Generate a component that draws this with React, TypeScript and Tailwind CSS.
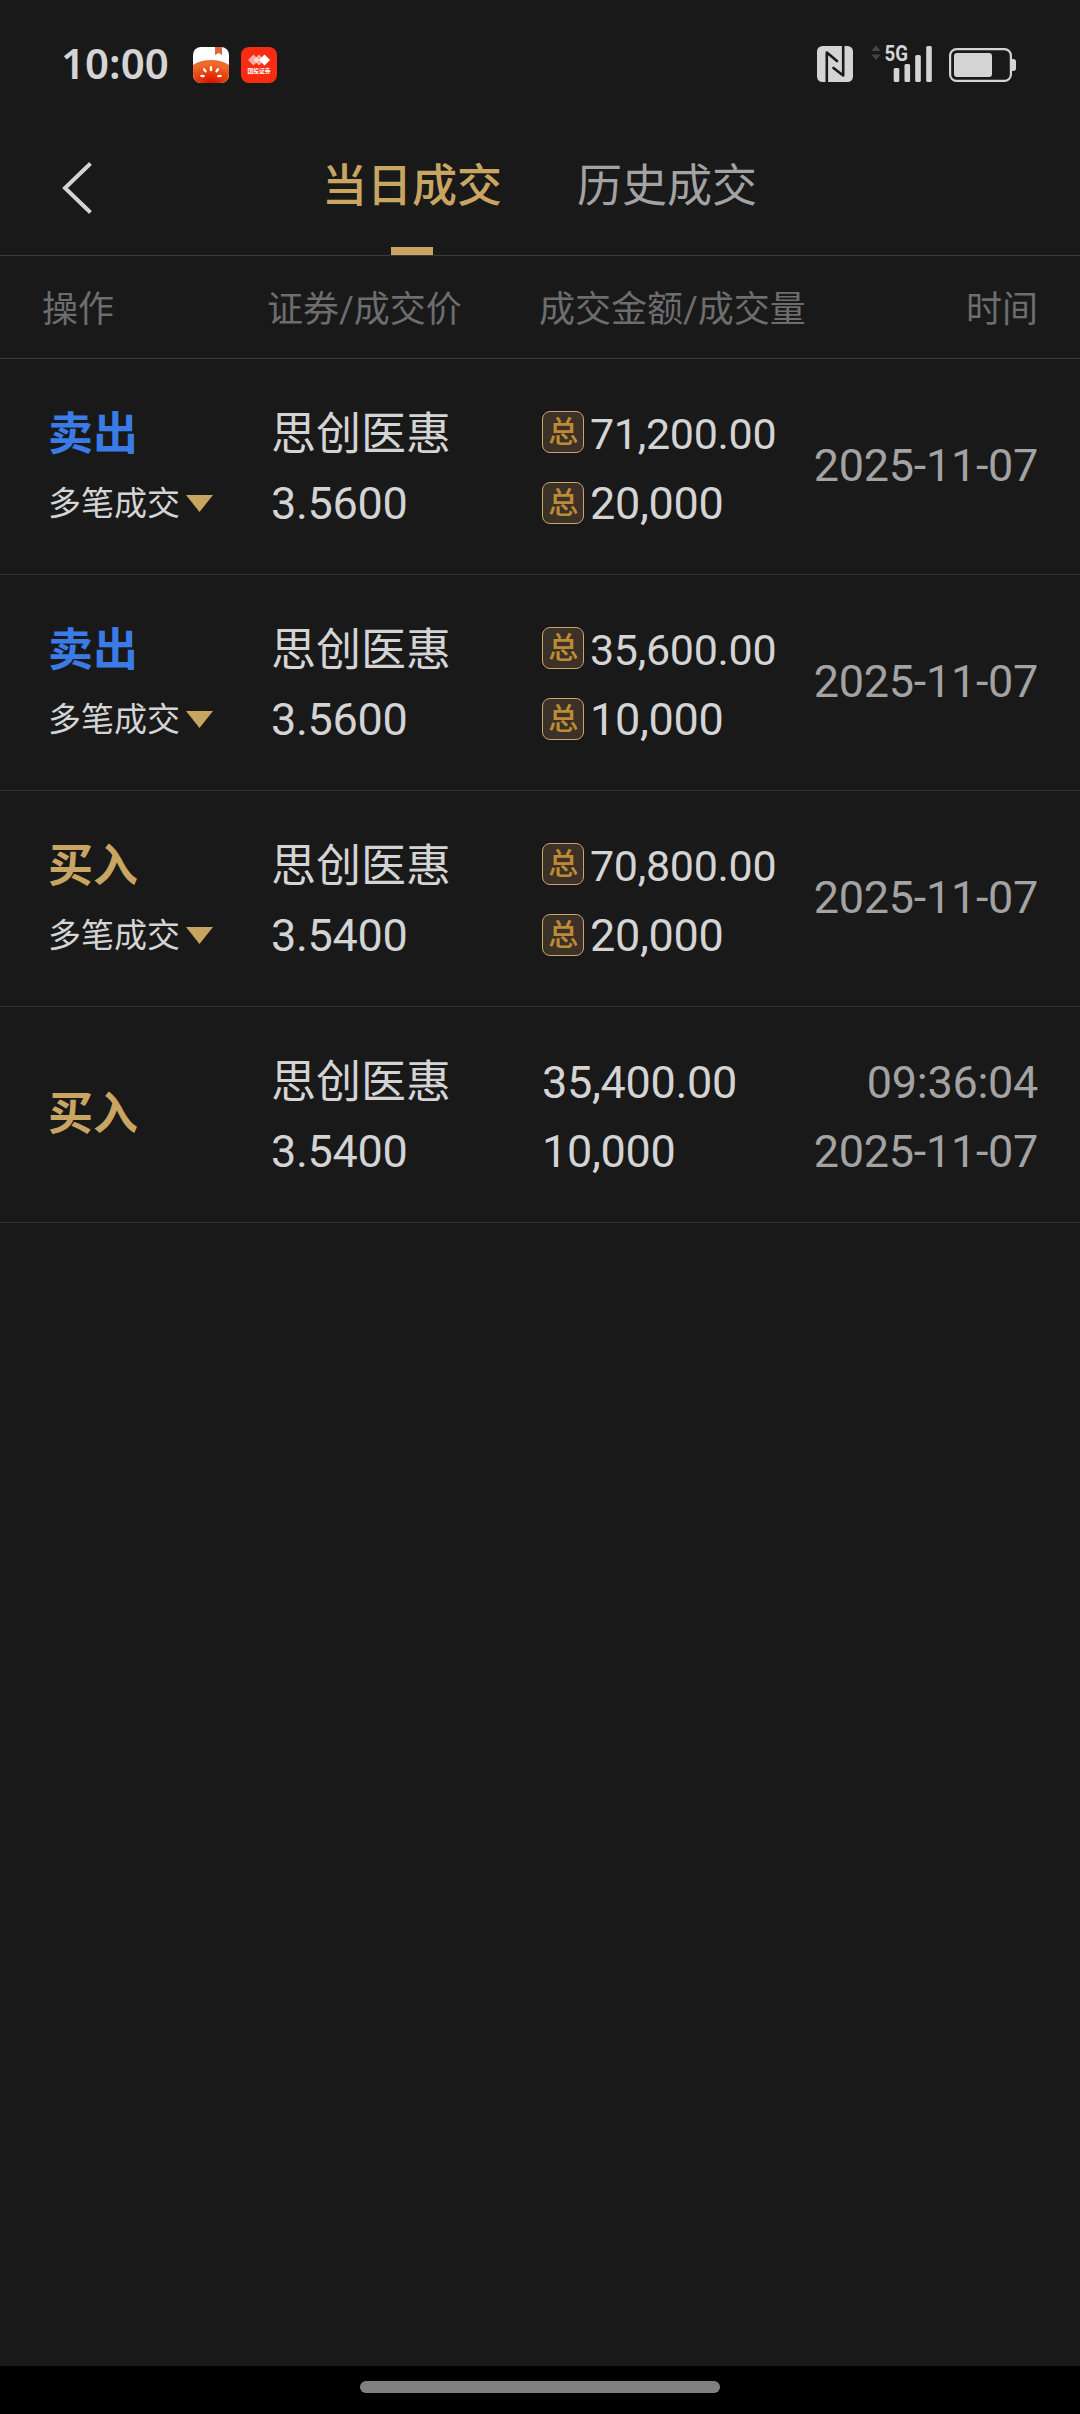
import React from 'react';

interface Trade {
  side: 'sell' | 'buy';
  name: string;
  price: string;
  amount: string;
  volume: string;
  date: string;
  time?: string;
}

const trades: Trade[] = [
  { side: 'sell', name: '思创医惠', price: '3.5600', amount: '71,200.00', volume: '20,000', date: '2025-11-07' },
  { side: 'sell', name: '思创医惠', price: '3.5600', amount: '35,600.00', volume: '10,000', date: '2025-11-07' },
  { side: 'buy', name: '思创医惠', price: '3.5400', amount: '70,800.00', volume: '20,000', date: '2025-11-07' },
  { side: 'buy', name: '思创医惠', price: '3.5400', amount: '35,400.00', volume: '10,000', date: '2025-11-07', time: '09:36:04' },
];

const TomatoIcon = () => (
  <svg width="36" height="36" viewBox="0 0 36 36">
    <defs>
      <clipPath id="tomatoClip">
        <rect width="36" height="36" rx="8" />
      </clipPath>
      <radialGradient id="tomatoFill" cx="0.5" cy="1" r="0.8">
        <stop offset="0" stopColor="#d80f00" />
        <stop offset="0.5" stopColor="#e23a0c" />
        <stop offset="1" stopColor="#ee6a2c" />
      </radialGradient>
    </defs>
    <g clipPath="url(#tomatoClip)">
      <rect width="36" height="36" fill="#fff" />
      <path d="M22 0h7v8l-3.500-2-3.500 2z" fill="#e0643c" />
      <path d="M0 18C5 14.500 11 13 18 13s13 1.500 18 5v18H0z" fill="url(#tomatoFill)" />
      <g fill="#fff">
        <ellipse cx="18" cy="21.500" rx="1.300" ry="2.800" />
        <ellipse cx="11.800" cy="23.200" rx="1.300" ry="2.600" transform="rotate(-35 11.800 23.200)" />
        <ellipse cx="24.200" cy="23.200" rx="1.300" ry="2.600" transform="rotate(35 24.200 23.200)" />
        <ellipse cx="9.500" cy="29" rx="2.500" ry="1.200" transform="rotate(8 9.500 29)" />
        <ellipse cx="26.500" cy="29" rx="2.500" ry="1.200" transform="rotate(-8 26.500 29)" />
      </g>
    </g>
  </svg>
);

const BrokerIcon = () => (
  <svg width="36" height="36" viewBox="0 0 36 36">
    <rect width="36" height="36" rx="8" fill="#f72c12" />
    <path d="M12.500 7.500l5.500 5.500-5.500 5.500L7 13z" fill="#fff" opacity="0.6" />
    <path d="M18 7.500l5.500 5.500-5.500 5.500-5.500-5.500z" fill="#fff" opacity="0.6" />
    <path d="M23.500 7.500L29 13l-5.500 5.500L18 13z" fill="#fff" />
    <text x="6.500" y="26.200" fontSize="6" fontWeight="700" fill="#fff" textLength="23" lengthAdjust="spacingAndGlyphs">国投证券</text>
  </svg>
);

const NfcIcon = () => (
  <svg width="36" height="36" viewBox="0 0 36 36">
    <rect width="36" height="36" rx="5.500" fill="#d4d4d4" />
    <path d="M9.800 36V6.500L20 15M26.200 0v29.500L16.500 22" fill="none" stroke="#19191a" strokeWidth="2.600" strokeLinecap="round" strokeLinejoin="round" />
  </svg>
);

const SignalIcon = () => (
  <svg width="62" height="48" viewBox="0 -10 62 48">
    <path d="M5 1.500l4.700 5.500H.3zM5 16l4.700-5.500H.3z" fill="#454546" />
    <text x="13.500" y="16.700" fontSize="22.500" fontWeight="700" fill="#d4d4d4" textLength="23.500" lengthAdjust="spacingAndGlyphs" fontFamily="Roboto, sans-serif">5G</text>
    <g fill="#d4d4d4">
      <rect x="22.700" y="24" width="5.600" height="14" rx="1.500" />
      <rect x="33.500" y="20" width="5.600" height="18" rx="1.500" />
      <rect x="44.200" y="11" width="5.600" height="27" rx="1.500" />
      <rect x="55.200" y="2" width="5.600" height="36" rx="1.500" />
    </g>
  </svg>
);

const BatteryIcon = () => (
  <svg width="67" height="34" viewBox="0 0 67 34">
    <rect x="1.100" y="1.100" width="60.800" height="31.800" rx="6.500" fill="none" stroke="#d4d4d4" strokeWidth="2.200" />
    <rect x="5" y="5" width="38" height="24" rx="3" fill="#d4d4d4" />
    <path d="M63 11h1.500c1.500 0 2.500 1.200 2.500 2.500v7c0 1.300-1 2.500-2.500 2.500H63z" fill="#d4d4d4" />
  </svg>
);

const StatusBar = () => (
  <div className="flex h-[130px] items-start justify-between pl-[61px] pr-16">
    <div className="flex items-start pt-[47px]">
      <span className="w-[132px] font-['Noto_Sans',sans-serif] text-[42px] font-semibold leading-8 text-[#d4d4d4]">10:00</span>
      <div className="flex gap-3">
        <TomatoIcon />
        <BrokerIcon />
      </div>
    </div>
    <div className="flex items-end pt-[34px]">
      <NfcIcon />
      <div className="ml-[18px]">
        <SignalIcon />
      </div>
      <div className="ml-4">
        <BatteryIcon />
      </div>
    </div>
  </div>
);

const TotalBadge = () => (
  <span className="flex size-[42px] shrink-0 items-center justify-center rounded-lg border border-[#c9a66b] bg-[#3b3126] text-[30px] font-medium leading-none text-[#bd8b35]">
    总
  </span>
);

const TotalValue: React.FC<{ value: string; className: string }> = ({ value, className }) => (
  <div className="flex h-[71px] items-center gap-[6px]">
    <TotalBadge />
    <span className={`leading-[45px] ${className}`}>{value}</span>
  </div>
);

const TradeRow: React.FC<{ trade: Trade }> = ({ trade }) => {
  const merged = !trade.time;

  return (
    <div className="flex h-[216px] border-b border-[#303031] pr-[42px] text-[45px] leading-[69px] tracking-[-0.3px] text-[#d4d4d4]">
      <div className={`flex w-[271px] flex-col pl-12 tracking-normal ${merged ? 'pt-[41px]' : 'justify-center'}`}>
        <span className={`font-bold ${trade.side === 'sell' ? 'text-[#3a7be6]' : 'text-[#c9a562]'}`}>
          {trade.side === 'sell' ? '卖出' : '买入'}
        </span>
        {merged && (
          <span className="flex items-center gap-[6px] text-[33px]">
            多笔成交
            <svg width="27" height="17" viewBox="0 0 27 17">
              <path d="M0 0h27L13.500 17z" fill="#c9a562" />
            </svg>
          </span>
        )}
      </div>
      <div className="flex w-[271px] flex-col pt-[41px]">
        <span className="tracking-normal">{trade.name}</span>
        <span>{trade.price}</span>
      </div>
      {merged ? (
        <div className="flex flex-col pt-[37px]">
          <TotalValue value={trade.amount} className="pt-1.5 text-[43px]" />
          <TotalValue value={trade.volume} className="pt-0.5" />
        </div>
      ) : (
        <div className="flex flex-col pt-[41px]">
          <span>{trade.amount}</span>
          <span>{trade.volume}</span>
        </div>
      )}
      <div className={`ml-auto flex flex-col text-right text-[#a3a3a3] ${merged ? 'justify-center pb-[3px]' : 'pt-[41px]'}`}>
        {trade.time && <span>{trade.time}</span>}
        <span>{trade.date}</span>
      </div>
    </div>
  );
};

export default function App() {
  return (
    <div className="flex h-[2414px] w-[1080px] flex-col bg-[#19191a] font-[Roboto,'Noto_Sans_CJK_SC',sans-serif]">
      <StatusBar />

      {/* Tabs */}
      <nav className="flex h-[126px] border-b border-[#3a3a3b] pl-[62px]">
        <svg className="mt-8" width="30" height="52" viewBox="0 0 30 52">
          <path d="M28.500 1.500L3 26l25.500 24.500" fill="none" stroke="#d4d4d4" strokeWidth="4" />
        </svg>
        <div className="ml-[230px] flex gap-[75px] text-[45px] leading-[113px]">
          <div className="flex flex-col items-center justify-between text-[#c9a562]">
            <span className="font-medium">当日成交</span>
            <span className="h-2 w-[42px] bg-[#c9a562]" />
          </div>
          <span className="text-[#a3a3a3]">历史成交</span>
        </div>
      </nav>

      {/* Column titles */}
      <div className="flex h-[103px] items-center border-b border-[#3a3a3b] pl-[42px] pr-[42px] pt-[5px] text-4xl text-[#6d6d6e]">
        <span className="w-[225px]">操作</span>
        <span className="w-[272px]">证券/成交价</span>
        <span>成交金额/成交量</span>
        <span className="ml-auto">时间</span>
      </div>

      <main className="flex-1">
        {trades.map((trade, idx) => (
          <TradeRow key={idx} trade={trade} />
        ))}
      </main>

      {/* Home indicator */}
      <footer className="flex h-12 justify-center bg-black pt-[15px]">
        <div className="h-3 w-[360px] rounded-full bg-[#808080]" />
      </footer>
    </div>
  );
}
